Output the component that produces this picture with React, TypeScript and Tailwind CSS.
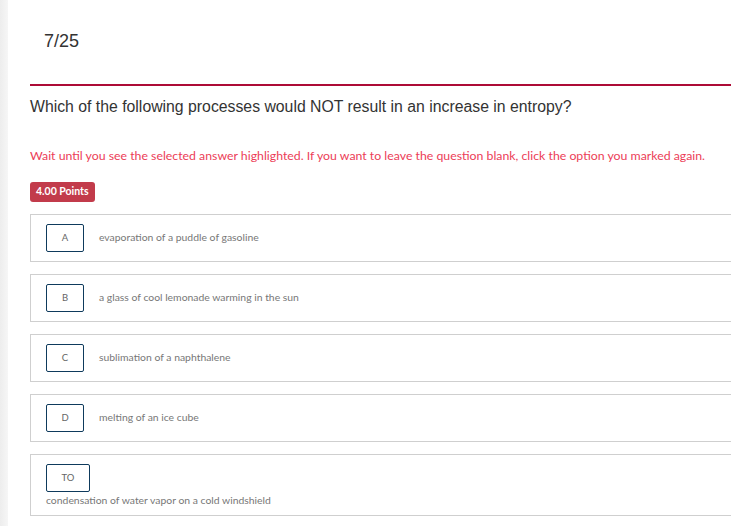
const OPTIONS = [
  { key: "A", text: "evaporation of a puddle of gasoline" },
  { key: "B", text: "a glass of cool lemonade warming in the sun" },
  { key: "C", text: "sublimation of a naphthalene" },
  { key: "D", text: "melting of an ice cube" },
];

export default function App() {
  return (
    <div className="flex h-[526px] w-[731px] overflow-hidden bg-white">
      <div className="h-full w-[8px] shrink-0 bg-gradient-to-r from-[#ededed] to-[#f6f6f6]" />
      <div className="w-[760px] shrink-0 pl-[22px] pt-[31px]">
        <div className="pl-[14px] font-['Liberation_Sans',Arial,sans-serif] text-[18px] leading-[20px] text-[#333]">
          7/25
        </div>
        <div className="mt-[33px] h-[2px] bg-[#ad0b36]" />
        <p className="mt-[11px] font-['Liberation_Sans',Arial,sans-serif] text-[15.8px] leading-[20px] text-[#333]">
          Which of the following processes would NOT result in an increase in entropy?
        </p>
        <p className="mt-[31px] font-['Lato',sans-serif] text-[12.3px] leading-[16px] text-[#ec3d57]">
          Wait until you see the selected answer highlighted. If you want to leave the question blank, click the option you marked again.
        </p>
        <div className="mt-[18px] inline-flex h-[20px] items-center rounded-[3px] bg-[#c23b4b] px-[6px] font-['Lato',sans-serif] text-[10.5px] font-bold text-white">
          4.00 Points
        </div>
        <div className="mt-[12px] flex flex-col gap-[12px]">
          {OPTIONS.map((o) => (
            <div
              key={o.key}
              className="flex h-[48px] items-center gap-[15px] border border-[#cfcfcf] pl-[15px]"
            >
              <div className="flex h-[28px] w-[38px] items-center justify-center rounded-[2px] border border-[#0e3a5c] font-['Lato',sans-serif] text-[9.5px] text-[#666]">
                {o.key}
              </div>
              <span className="font-['Lato',sans-serif] text-[10.4px] text-[#777]">{o.text}</span>
            </div>
          ))}
          <div className="flex h-[62px] flex-col items-start border border-[#cfcfcf] pl-[15px] pt-[9px]">
            <div className="flex h-[28px] w-[44px] items-center justify-center rounded-[2px] border border-[#0e3a5c] font-['Lato',sans-serif] text-[9.5px] text-[#666]">
              TO
            </div>
            <span className="mt-[1px] font-['Lato',sans-serif] text-[10.4px] leading-[14px] text-[#777]">
              condensation of water vapor on a cold windshield
            </span>
          </div>
        </div>
      </div>
    </div>
  );
}
